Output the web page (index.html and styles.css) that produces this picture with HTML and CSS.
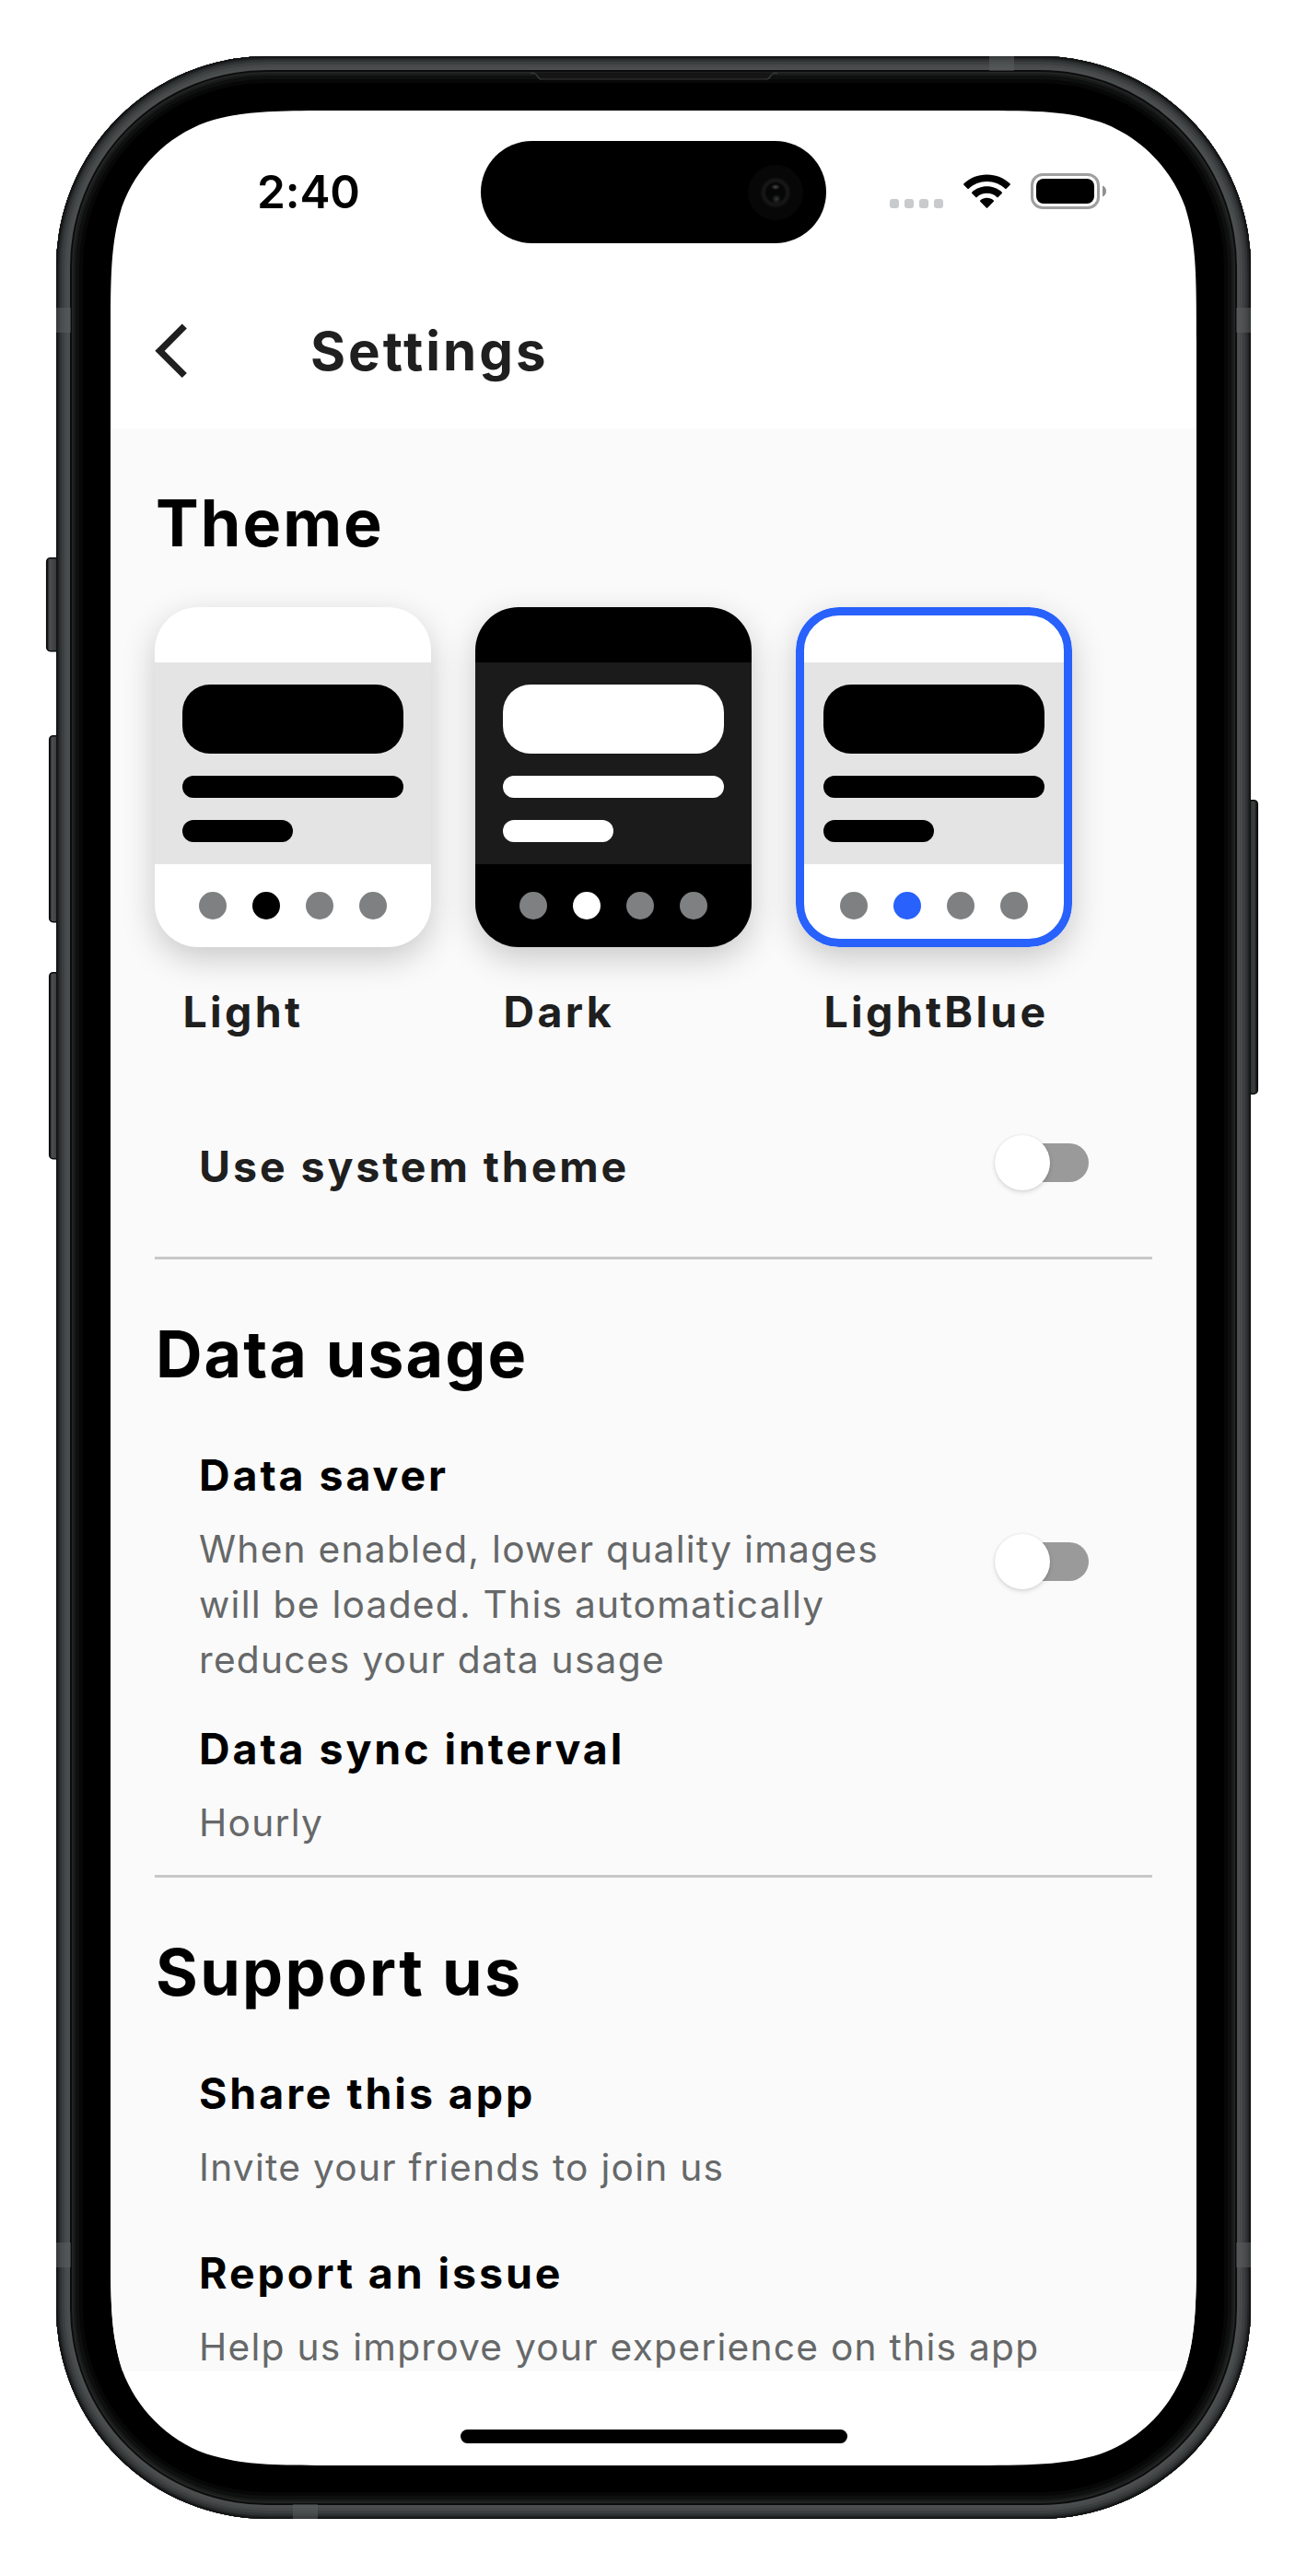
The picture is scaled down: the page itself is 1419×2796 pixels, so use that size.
FILE: index.html
```
<!DOCTYPE html>
<html lang="en">
<head>
<meta charset="utf-8">
<title>Settings</title>
<link rel="stylesheet" href="styles.css">
</head>
<body>
<div class="device">
  <svg class="frame" width="1419" height="2796" viewBox="0 0 1419 2796" aria-hidden="true">
    <defs>
      <clipPath id="bodyClip"><rect x="61" y="61" width="1297" height="2673" rx="229"/></clipPath>
      <linearGradient id="btn" x1="0" x2="1" y1="0" y2="0">
        <stop offset="0" stop-color="#0c0d0d"/><stop offset=".2" stop-color="#4b4f50"/><stop offset=".6" stop-color="#3a3e3f"/><stop offset="1" stop-color="#141515"/>
      </linearGradient>
      <linearGradient id="btnR" x1="1" x2="0" y1="0" y2="0">
        <stop offset="0" stop-color="#0c0d0d"/><stop offset=".25" stop-color="#3a3e3f"/><stop offset="1" stop-color="#1c1e1e"/>
      </linearGradient>
    </defs>
    <g stroke="#0b0c0c" stroke-width="1.500">
      <rect x="50.700" y="605.700" width="16" height="101" rx="4" fill="url(#btn)"/>
      <rect x="53.700" y="798.700" width="14" height="202" rx="4" fill="url(#btn)"/>
      <rect x="53.700" y="1055.700" width="14" height="202" rx="4" fill="url(#btn)"/>
      <rect x="1350" y="868.700" width="15.300" height="318.500" rx="4" fill="url(#btnR)"/>
    </g>
    <g clip-path="url(#bodyClip)" fill="none">
      <rect x="61" y="61" width="1297" height="2673" rx="229" fill="#000"/>
      <g class="bezel">
        <rect x="61" y="61" width="1297" height="2673" rx="229" stroke="#070707" stroke-width="58"/>
        <rect x="61" y="61" width="1297" height="2673" rx="229" stroke="#0e0f0f" stroke-width="50"/>
        <rect x="61" y="61" width="1297" height="2673" rx="229" stroke="#191a1a" stroke-width="42"/>
        <rect x="61" y="61" width="1297" height="2673" rx="229" stroke="#252626" stroke-width="37"/>
        <rect x="61" y="61" width="1297" height="2673" rx="229" stroke="#0b0c0c" stroke-width="34"/>
        <rect x="61" y="61" width="1297" height="2673" rx="229" stroke="#4b4e4f" stroke-width="30"/>
        <rect x="61" y="61" width="1297" height="2673" rx="229" stroke="#464949" stroke-width="24"/>
        <rect x="61" y="61" width="1297" height="2673" rx="229" stroke="#3c3f40" stroke-width="18"/>
        <rect x="61" y="61" width="1297" height="2673" rx="229" stroke="#303334" stroke-width="12"/>
        <rect x="61" y="61" width="1297" height="2673" rx="229" stroke="#202223" stroke-width="7"/>
        <rect x="61" y="61" width="1297" height="2673" rx="229" stroke="#111212" stroke-width="3"/>
      </g>
      <g fill="#5c5f60" fill-opacity=".5">
        <rect x="1074" y="61" width="27" height="16"/>
        <rect x="318" y="2718" width="27" height="16"/>
        <rect x="61" y="334" width="16" height="27"/>
        <rect x="61" y="2434" width="16" height="27"/>
        <rect x="1342" y="334" width="16" height="27"/>
        <rect x="1342" y="2434" width="16" height="27"/>
      </g>
      <path d="M580 78.500C584 80 583 86 588 86H832C837 86 836 80 840 78.500Z" fill="#151515"/>
      <path d="M576 79.500H580C584 80 583 86 588 86H832C837 86 836 80 840 79.500H844" stroke="#3a3b3b" stroke-width="1.200"/>
    </g>
  </svg>

  <div class="screen">
    <div class="island"><span class="camera"></span></div>
    <div class="status">
      <span class="time">2:40</span>
      <div class="indicators">
        <div class="signal"><i></i><i></i><i></i><i></i></div>
        <svg class="wifi" width="51" height="38" viewBox="0 0 51 38">
          <path d="M25.500 0.500C15.700 0.500 6.900 4.200 .4 10.300C0 10.700 0 11.300 .4 11.700L4.400 15.700C4.800 16.100 5.400 16.100 5.800 15.700C10.900 10.900 17.800 8 25.500 8S40.100 10.900 45.200 15.700C45.600 16.100 46.200 16.100 46.600 15.700L50.600 11.700C51 11.300 51 10.700 50.600 10.300C44.100 4.200 35.300 .5 25.500 .5Z"/>
          <path d="M25.500 13.300C19.200 13.300 13.500 15.700 9.300 19.500C8.900 19.900 8.900 20.500 9.300 20.900L13.300 24.900C13.700 25.300 14.300 25.300 14.700 24.900C17.600 22.300 21.300 20.800 25.500 20.800S33.400 22.300 36.300 24.900C36.700 25.300 37.300 25.300 37.700 24.900L41.700 20.900C42.100 20.500 42.100 19.900 41.700 19.500C37.500 15.700 31.800 13.300 25.500 13.300Z"/>
          <path d="M25.500 25.700C22.700 25.700 20.200 26.700 18.200 28.400C17.800 28.800 17.800 29.400 18.200 29.800L24.800 36.500C25.200 36.900 25.800 36.900 26.200 36.500L32.800 29.800C33.200 29.400 33.200 28.800 32.800 28.400C30.800 26.700 28.300 25.700 25.500 25.700Z"/>
        </svg>
        <svg class="battery" width="82" height="39" viewBox="0 0 82 39">
          <rect x="1.500" y="1.500" width="72" height="36" rx="11.500" fill="none" stroke="#9f9f9f" stroke-width="3"/>
          <rect x="6" y="6" width="63" height="27" rx="8" fill="#000"/>
          <path d="M78 13.500C80.500 14.500 82 16.800 82 19.500S80.500 24.500 78 25.500Z" fill="#909090"/>
        </svg>
      </div>
    </div>
    <header class="appbar">
      <svg class="back" width="40" height="64" viewBox="0 0 40 64"><path d="M32.300 6L5.500 32.800L32.300 59.500" fill="none" stroke="#1f1f1f" stroke-width="7.300"/></svg>
      <h1 class="title">Settings</h1>
    </header>

    <main class="content">
      <section class="section">
        <h2 class="heading">Theme</h2>
        <div class="themes">
          <div class="theme light">
            <div class="preview"><div class="top"></div><div class="mid"><b class="hero"></b><b class="line"></b><b class="line short"></b></div><div class="dots"><i></i><i class="on"></i><i></i><i></i></div></div>
            <span class="label">Light</span>
          </div>
          <div class="theme dark">
            <div class="preview"><div class="top"></div><div class="mid"><b class="hero"></b><b class="line"></b><b class="line short"></b></div><div class="dots"><i></i><i class="on"></i><i></i><i></i></div></div>
            <span class="label">Dark</span>
          </div>
          <div class="theme blue selected">
            <div class="preview"><div class="top"></div><div class="mid"><b class="hero"></b><b class="line"></b><b class="line short"></b></div><div class="dots"><i></i><i class="on"></i><i></i><i></i></div></div>
            <span class="label">LightBlue</span>
          </div>
        </div>
        <div class="row system">
          <span class="name">Use system theme</span>
          <span class="switch"></span>
        </div>
      </section>

      <section class="section usage">
        <h2 class="heading">Data usage</h2>
        <div class="items">
          <div class="row saver">
            <div class="item">
              <h3 class="name">Data saver</h3>
              <p class="desc">When enabled, lower quality images<br>will be loaded. This automatically<br>reduces your data usage</p>
            </div>
            <span class="switch"></span>
          </div>
          <div class="item">
            <h3 class="name">Data sync interval</h3>
            <p class="desc">Hourly</p>
          </div>
        </div>
      </section>

      <section class="section support">
        <h2 class="heading">Support us</h2>
        <div class="items">
          <div class="item">
            <h3 class="name">Share this app</h3>
            <p class="desc">Invite your friends to join us</p>
          </div>
          <div class="item">
            <h3 class="name">Report an issue</h3>
            <p class="desc">Help us improve your experience on this app</p>
          </div>
        </div>
      </section>
    </main>
    <footer class="home"><span class="homebar"></span></footer>
  </div>
</div>
</body>
</html>
```
FILE: styles.css
```
* { box-sizing: border-box; margin: 0; padding: 0; }

body {
  background: #fff;
  font-family: Inter, "Liberation Sans", sans-serif;
  color: #000;
}

.device {
  position: relative;
  width: 1419px;
  height: 2796px;
  padding: 120px;
  overflow: hidden;
}

.frame { position: absolute; left: 0; top: 0; }

/* Screen with continuous corners */
.screen {
  position: relative;
  display: flex;
  flex-direction: column;
  width: 1179px;
  height: 2556px;
  background: #fff;
  clip-path: path("M252.2 0H926.8C999.400 0 1035.700 0 1068.500 10.800L1074.800 12.400C1117.500 27.900 1151.100 61.500 1166.600 104.200C1179 143.300 1179 179.600 1179 252.200V2303.800C1179 2376.400 1179 2412.700 1166.600 2451.800C1151.100 2494.500 1117.500 2528.100 1074.800 2543.600C1035.700 2556 999.400 2556 926.800 2556H252.200C179.600 2556 143.300 2556 104.200 2543.600C61.500 2528.100 27.900 2494.500 12.400 2451.800C0 2412.700 0 2376.400 0 2303.800V252.200C0 179.600 0 143.300 12.400 104.200C27.900 61.500 61.500 27.900 104.200 12.400C143.300 0 179.600 0 252.200 0Z");
}

.island {
  position: absolute;
  left: 402px;
  top: 33px;
  width: 375px;
  height: 111px;
  border-radius: 56px;
  background: #000;
}

.camera {
  position: absolute;
  left: 290px;
  top: 26px;
  width: 60px;
  height: 60px;
  border-radius: 50%;
  background:
    radial-gradient(ellipse 5px 3px at 30px 24px, #4a4d4d, transparent),
    radial-gradient(circle 5px at 31px 37px, #353a39, transparent),
    radial-gradient(circle at center, #060606 10px, #161616 12px, #161616 14px, #070707 17px, #070707 30px);
}

.status {
  flex: none;
  display: flex;
  align-items: center;
  justify-content: space-between;
  height: 175px;
  padding: 0 98px 0 159px;
}

.time { font-size: 49.5px; font-weight: 600; letter-spacing: -0.1px; }

.indicators { display: flex; align-items: center; }

.signal { display: flex; gap: 6px; margin: 27px 22px 0 0; }
.signal i { width: 10px; height: 10px; border-radius: 3px; background: #c9cacb; }

.wifi { display: block; margin-right: 22px; }
.battery { display: block; }

.appbar {
  flex: none;
  display: flex;
  align-items: center;
  height: 170px;
  padding-left: 48px;
}

.back { display: block; }

.title {
  margin-left: 129px;
  padding-top: 2px;
  font-size: 58.2px;
  font-weight: 700;
  letter-spacing: 3px;
  color: #1f1f1f;
}

.content {
  flex: none;
  height: 2109px;
  padding: 0 48px;
  overflow: hidden;
  background: #fafafa;
}

.section { padding-top: 61px; }
.section + .section { border-top: 3px solid #c8c8c8; }

.heading {
  padding-left: 1px;
  font-size: 70px;
  line-height: 84px;
  font-weight: 700;
  letter-spacing: 2.05px;
}

.support .heading { letter-spacing: 2.3px; }

.themes { display: flex; gap: 48px; margin-top: 49px; }
.theme { display: flex; flex-direction: column; gap: 40px; width: 300px; }

.preview {
  position: relative;
  display: flex;
  flex-direction: column;
  height: 369px;
  border-radius: 47px;
  overflow: hidden;
  background: #fff;
  box-shadow: 0 12px 36px rgba(0, 0, 0, .2);
}

.top { height: 60px; }

.mid {
  display: flex;
  flex-direction: column;
  gap: 24px;
  height: 219px;
  padding: 24px 30px;
  background: #e4e4e4;
}

.hero { height: 75px; border-radius: 30px; background: #000; }
.line { height: 24px; border-radius: 12px; background: #000; }
.short { width: 120px; }

.dots { display: flex; align-items: center; justify-content: center; gap: 28px; height: 90px; }
.dots i { width: 30px; height: 30px; border-radius: 50%; background: #7f8081; }
.dots .on { background: #000; }

.dark .preview { background: #000; }
.dark .mid { background: #1b1b1b; }
.dark .hero, .dark .line, .dark .on { background: #fff; }
.blue .on { background: #2861fb; }

.selected .preview::after {
  content: "";
  position: absolute;
  inset: 0;
  border: 9px solid #2861fb;
  border-radius: 47px;
}

.label {
  padding-left: 30.5px;
  font-size: 46.5px;
  line-height: 60px;
  font-weight: 700;
  letter-spacing: 3.3px;
  color: #1f1f1f;
}

.row { display: flex; align-items: center; justify-content: space-between; padding-right: 69px; }

.system { height: 120px; margin: 74px 0 42px; padding-left: 48px; }
.system .name { padding-top: 7px; color: #1f1f1f; }

.name { font-size: 46.5px; line-height: 60px; font-weight: 700; letter-spacing: 2.92px; }

.desc {
  margin: 21px 0 -1px;
  font-size: 40.7px;
  line-height: 60px;
  font-weight: 400;
  letter-spacing: 1.25px;
  color: #666869;
}

.items { display: flex; flex-direction: column; gap: 37px; padding: 59px 0 27px 48px; }
.support .items { gap: 55px; }
.saver .switch { margin-bottom: 12px; }

.switch {
  display: flex;
  align-items: center;
  flex: none;
  width: 99px;
  height: 42px;
  border-radius: 21px;
  background: #9a9a9a;
}

.switch::before {
  content: "";
  flex: none;
  width: 60px;
  height: 60px;
  margin-left: -3px;
  border-radius: 50%;
  background: #fff;
  box-shadow: 0 2px 5px rgba(0, 0, 0, .14), 0 0 2px rgba(0, 0, 0, .1);
}

.home { flex: none; display: flex; justify-content: center; height: 102px; padding-top: 63px; }
.homebar { width: 420px; height: 15px; border-radius: 8px; background: #000; }
```
